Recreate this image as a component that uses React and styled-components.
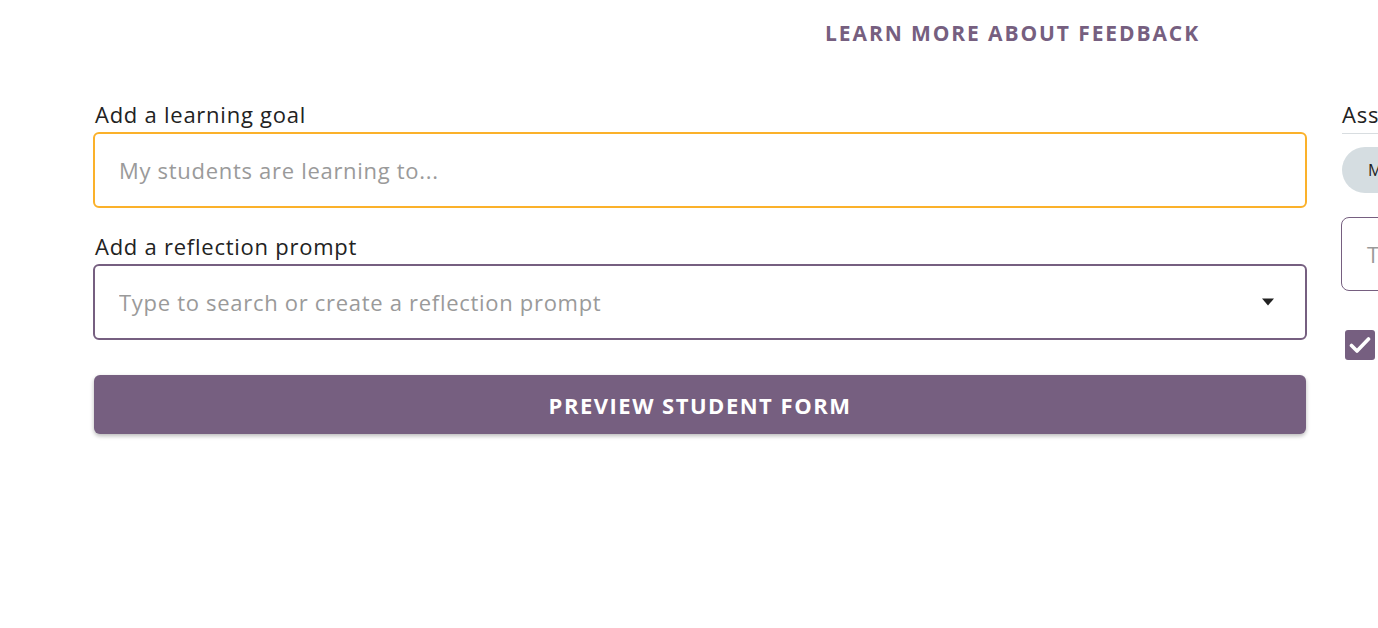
import React from "react";
import styled, { createGlobalStyle } from "styled-components";

const Global = createGlobalStyle`
  html, body { margin: 0; padding: 0; background: #fff; overflow: hidden; }
  body { font-family: "Open Sans", "Noto Sans", sans-serif; }
  * { box-sizing: border-box; }
`;

const purple = "#765f80";

const Page = styled.div`
  width: 1378px;
  height: 628px;
  overflow: hidden;
`;

const TopBar = styled.div`
  display: flex;
  justify-content: flex-end;
  padding: 19px 0 0 0;
  width: 1200px;
  height: 101px;
`;

const LearnLink = styled.a`
  color: ${purple};
  font-weight: 700;
  font-size: 21px;
  letter-spacing: 1.9px;
  text-transform: uppercase;
  text-decoration: none;
  line-height: 28px;
  white-space: nowrap;
`;

const Columns = styled.div`
  display: grid;
  grid-template-columns: 1214px 420px;
  column-gap: 34px;
  padding-left: 93px;
  width: 1800px;
`;

const Col = styled.div`
  display: flex;
  flex-direction: column;
`;

const Label = styled.label`
  font-size: 22px;
  letter-spacing: 0.75px;
  color: #222;
  line-height: 26px;
  margin-bottom: 5px;
  margin-left: 2px;
`;

const Field = styled.div`
  height: 76px;
  border: 2px solid ${(p) => p.$color};
  border-radius: 6px;
  display: flex;
  align-items: center;
  padding: 0 24px;
  margin-bottom: ${(p) => p.$mb || 0}px;
  background: #fff;
`;

const Input = styled.input`
  flex: 1;
  border: none;
  outline: none;
  font-family: inherit;
  font-size: 22px;
  letter-spacing: 0.7px;
  color: #333;
  background: transparent;
  padding: 0;
  &::placeholder { color: #9a9a9a; }
`;

const Caret = styled.svg`
  width: 14px;
  height: 8px;
  margin-right: 6px;
  flex: none;
`;

const Button = styled.button`
  height: 59px;
  margin: 0 1px;
  border: none;
  border-radius: 6px;
  background: ${purple};
  color: #fff;
  font-family: inherit;
  font-weight: 700;
  font-size: 22px;
  letter-spacing: 1.5px;
  text-transform: uppercase;
  box-shadow: 0 2px 4px rgba(0, 0, 0, 0.28);
  cursor: pointer;
`;

const SideTitle = styled.div`
  font-size: 22px;
  letter-spacing: 0.75px;
  color: #222;
  line-height: 26px;
  padding-bottom: 6px;
  border-bottom: 1px solid #d8dde0;
  margin-left: 1px;
  margin-bottom: 13px;
  white-space: nowrap;
`;

const Pill = styled.div`
  height: 46px;
  width: 160px;
  border-radius: 23px;
  background: #d5dde1;
  margin-left: 1px;
  display: flex;
  align-items: center;
  padding-left: 26px;
  font-size: 16px;
  color: #222;
  margin-bottom: 24px;
  white-space: nowrap;
`;

const SideField = styled.div`
  height: 74px;
  border: 1px solid ${purple};
  border-radius: 8px;
  display: flex;
  align-items: center;
  padding-left: 25px;
  font-size: 22px;
  color: #9a9a9a;
  margin-bottom: 39px;
  white-space: nowrap;
`;

const Check = styled.div`
  width: 30px;
  height: 30px;
  margin-left: 4px;
  border-radius: 3px;
  background: ${purple};
  display: flex;
  align-items: center;
  justify-content: center;
`;

export default function App() {
  return (
    <Page>
      <Global />
      <TopBar>
        <LearnLink href="#">Learn more about feedback</LearnLink>
      </TopBar>
      <Columns>
        <Col>
          <Label>Add a learning goal</Label>
          <Field $color="#fbb12a" $mb={25}>
            <Input placeholder="My students are learning to..." />
          </Field>
          <Label>Add a reflection prompt</Label>
          <Field $color={purple} $mb={35}>
            <Input placeholder="Type to search or create a reflection prompt" />
            <Caret viewBox="0 0 14 8">
              <path d="M1 0.5 L13 0.5 L7 7.5 Z" fill="#222" />
            </Caret>
          </Field>
          <Button>Preview student form</Button>
        </Col>
        <Col>
          <SideTitle>Assessment</SideTitle>
          <Pill>My criteria</Pill>
          <SideField>Type a criterion</SideField>
          <Check>
            <svg width="22" height="18" viewBox="0 0 22 18">
              <path d="M2.5 9.5 L8 15 L19.5 3" fill="none" stroke="#fff" strokeWidth="3.6" strokeLinecap="round" strokeLinejoin="round" />
            </svg>
          </Check>
        </Col>
      </Columns>
    </Page>
  );
}
